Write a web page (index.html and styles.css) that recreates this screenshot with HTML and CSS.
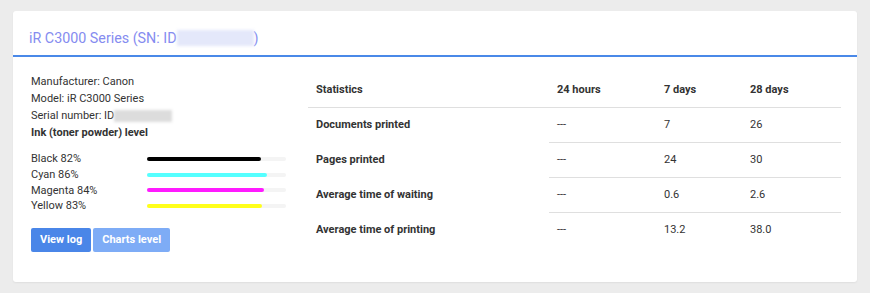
FILE: index.html
```html
<!DOCTYPE html>
<html lang="en">
<head>
    <meta charset="UTF-8">
    <title>Printer</title>
    <link rel="stylesheet" href="styles.css">
</head>
<body>
    <div class="card">
        <div class="card-header">
            <h3>iR C3000 Series (SN: ID<span class="blur blur-title"></span>)</h3>
        </div>
        <div class="card-body">
            <div class="info">
                <div>Manufacturer: Canon</div>
                <div>Model: iR C3000 Series</div>
                <div>Serial number: ID<span class="blur blur-serial"></span></div>
                <div class="ink-title">Ink (toner powder) level</div>

                <div class="ink-list">
                    <div class="ink-row">
                        <span class="ink-label">Black 82%</span>
                        <div class="ink-track"><div class="ink-fill black" style="width: 82%"></div></div>
                    </div>
                    <div class="ink-row">
                        <span class="ink-label">Cyan 86%</span>
                        <div class="ink-track"><div class="ink-fill cyan" style="width: 86%"></div></div>
                    </div>
                    <div class="ink-row">
                        <span class="ink-label">Magenta 84%</span>
                        <div class="ink-track"><div class="ink-fill magenta" style="width: 84%"></div></div>
                    </div>
                    <div class="ink-row">
                        <span class="ink-label">Yellow 83%</span>
                        <div class="ink-track"><div class="ink-fill yellow" style="width: 83%"></div></div>
                    </div>
                </div>

                <div class="buttons">
                    <button class="btn btn-primary">View log</button>
                    <button class="btn btn-light">Charts level</button>
                </div>
            </div>

            <table class="stats">
                <thead>
                    <tr>
                        <th class="col-name">Statistics</th>
                        <th class="col-day">24 hours</th>
                        <th class="col-week">7 days</th>
                        <th class="col-month">28 days</th>
                    </tr>
                </thead>
                <tbody>
                    <tr>
                        <td class="row-name">Documents printed</td>
                        <td>---</td>
                        <td>7</td>
                        <td>26</td>
                    </tr>
                    <tr>
                        <td class="row-name">Pages printed</td>
                        <td>---</td>
                        <td>24</td>
                        <td>30</td>
                    </tr>
                    <tr>
                        <td class="row-name">Average time of waiting</td>
                        <td>---</td>
                        <td>0.6</td>
                        <td>2.6</td>
                    </tr>
                    <tr>
                        <td class="row-name">Average time of printing</td>
                        <td>---</td>
                        <td>13.2</td>
                        <td>38.0</td>
                    </tr>
                </tbody>
            </table>
        </div>
    </div>
</body>
</html>
```

FILE: styles.css
```css
body {
    font-family: Roboto, "Liberation Sans", sans-serif;
    background: #ececec;
    color: #333;
    margin: 0;
    padding: 11px 13px;
    font-size: 11px;
}

.card {
    background: white;
    border-radius: 3px;
    box-shadow: 0 1px 2px rgba(0, 0, 0, 0.06);
    height: 271px;
    box-sizing: border-box;
}

.card-header {
    height: 44px;
    border-bottom: 2px solid #4a89e8;
    padding: 0 16px;
    display: flex;
    align-items: center;
}

.card-header h3 {
    margin: 0;
    padding-top: 10px;
    font-size: 14.3px;
    font-weight: normal;
    color: #858cf0;
    display: flex;
    align-items: center;
}

.blur {
    display: inline-block;
    filter: blur(1.5px);
}

.blur-title {
    width: 77px;
    height: 16px;
    background: #e4e8fa;
}

.blur-serial {
    width: 58px;
    height: 12px;
    background: #dcdcdc;
    vertical-align: middle;
}

.card-body {
    display: flex;
    padding: 16px 16px 0 18px;
}

.info {
    width: 255px;
    line-height: 17px;
}

.ink-title {
    font-weight: bold;
}

.ink-list {
    margin-top: 10px;
}

.ink-row {
    display: flex;
    align-items: center;
    height: 15.7px;
}

.ink-label {
    width: 116px;
}

.ink-track {
    width: 139px;
    height: 4px;
    background: #f4f4f4;
    border-radius: 2px;
}

.ink-fill {
    height: 100%;
    border-radius: 2px;
}

.black { background: #000; }
.cyan { background: #55ffff; }
.magenta { background: #ff1aff; }
.yellow { background: #ffff1a; }

.buttons {
    margin-top: 14px;
    display: flex;
    gap: 2px;
}

.btn {
    font-family: Roboto, "Liberation Sans", sans-serif;
    font-size: 11px;
    font-weight: bold;
    color: white;
    border: none;
    border-radius: 2px;
    height: 24px;
    padding: 0 9px;
    white-space: nowrap;
    cursor: pointer;
}

.btn-primary {
    background-color: #4a86e8;
}

.btn-light {
    background-color: #7eacf6;
}

.stats {
    align-self: flex-start;
    margin-left: 22px;
    margin-top: -1px;
    width: 533px;
    border-collapse: collapse;
    font-size: 11px;
}

.stats th,
.stats td {
    text-align: left;
    padding: 0 8px;
    height: 35px;
    box-sizing: border-box;
}

.stats th {
    font-weight: bold;
    border-bottom: 1px solid #dfdfdf;
}

.stats tbody tr + tr td {
    border-top: 1px solid #dfdfdf;
}

.stats tbody tr + tr td.row-name {
    border-top: none;
}

.stats td.row-name {
    font-weight: bold;
}

.col-name { width: 241px; }
.col-day { width: 107px; }
.col-week { width: 86px; }
.col-month { width: 99px; }
```
